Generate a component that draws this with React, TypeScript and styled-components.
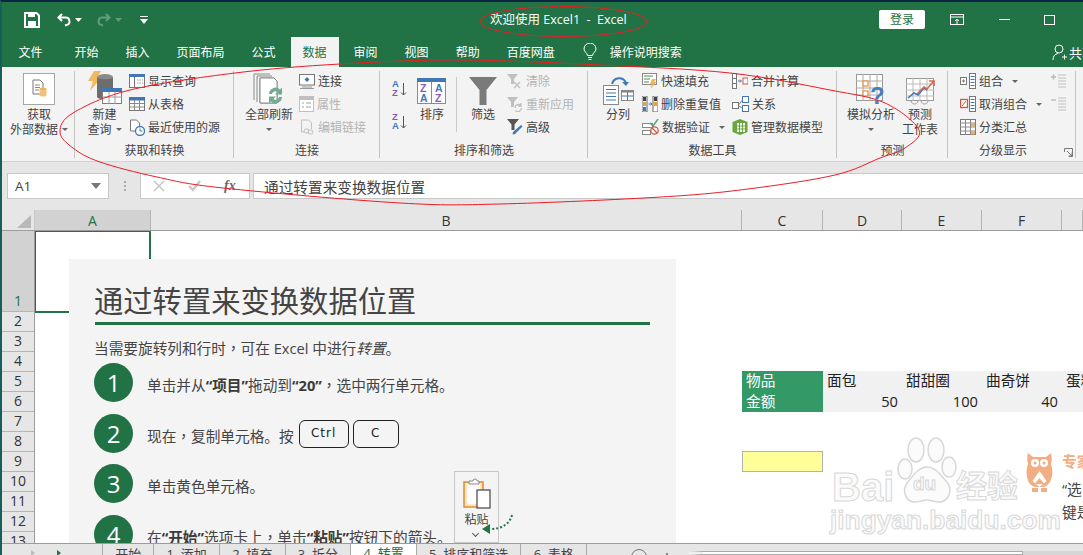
import React from "react";
import styled, { createGlobalStyle } from "styled-components";

const green = "#217346";
const cjk = `"Open Sans", "Noto Sans CJK SC", sans-serif`;
const colTemplate = "116px 591px 81px 79px 80px 80px 1fr";

const Global = createGlobalStyle`
  html, body { margin: 0; padding: 0; overflow: hidden; background: #fff; }
  * { box-sizing: border-box; }
  svg { display: block; flex: none; }
`;

const Windowed = styled.div`
  position: relative;
  width: 1083px;
  height: 555px;
  display: flex;
  flex-direction: column;
  overflow: hidden;
  border-top: 2px solid #0a2540;
  border-left: 2px solid #17605a;
  font-family: ${cjk};
  font-size: 12px;
  color: #444;
`;

const TitleBar = styled.div`
  height: 35px;
  flex: none;
  background: ${green};
  display: flex;
  align-items: center;
  padding-left: 22px;
  color: #fff;
`;
const Quick = styled.div`
  width: 466px;
  display: flex;
  align-items: center;
  gap: 3px;
`;
const Spacer = styled.div<{ $w: number }>`
  width: ${(p) => p.$w}px;
`;
const TitleText = styled.div`
  width: 389px;
  margin-top: -2px;
  font-size: 12.5px;
  white-space: pre;
`;
const LoginButton = styled.div`
  width: 46px;
  height: 19px;
  margin-top: -1px;
  background: #fff;
  color: ${green};
  border-radius: 2px;
  font-size: 12px;
  display: flex;
  align-items: center;
  justify-content: center;
`;
const WinButtons = styled.div`
  display: flex;
  align-items: center;
  margin-left: 25px;
`;
const WinButton = styled.div<{ $w: number }>`
  width: ${(p) => p.$w}px;
`;
const TabBar = styled.div`
  height: 30px;
  flex: none;
  background: ${green};
  display: flex;
  padding-left: 3px;
  position: relative;
`;
const Tab = styled.div<{ $active?: boolean; $gap?: number }>`
  height: 30px;
  padding: 0 12px;
  margin: 0 1.5px 0 ${(p) => p.$gap ?? 1.5}px;
  display: flex;
  align-items: center;
  color: ${(p) => (p.$active ? green : "#fff")};
  background: ${(p) => (p.$active ? "#f3f3f3" : "transparent")};
`;
const ShareArea = styled.div`
  position: absolute;
  left: 1050px;
  top: 6px;
  width: 33px;
  display: flex;
  align-items: center;
  gap: 2px;
  color: #fff;
  font-size: 13px;
  white-space: nowrap;
  overflow: hidden;
`;

const Ribbon = styled.div`
  height: 95px;
  flex: none;
  background: #f3f3f3;
  border-bottom: 1px solid #d2d2d2;
  display: flex;
`;
const Group = styled.div<{ $w: number }>`
  position: relative;
  width: ${(p) => p.$w}px;
  height: 91px;
  flex: none;
  display: flex;
  flex-direction: column;
  &::after {
    content: "";
    position: absolute;
    right: 0;
    top: 4px;
    bottom: 0;
    width: 1px;
    background: #c4c4c4;
  }
`;
const GroupBody = styled.div`
  flex: 1;
  display: flex;
  align-items: flex-start;
  min-height: 0;
`;
const GroupLabel = styled.div<{ $pad?: number }>`
  height: 15px;
  line-height: 15px;
  text-align: center;
  padding-right: ${(p) => p.$pad ?? 0}px;
  white-space: nowrap;
`;
const BigButton = styled.div<{ $w: number; $ml: number }>`
  width: ${(p) => p.$w}px;
  margin-left: ${(p) => p.$ml}px;
  display: flex;
  flex-direction: column;
  align-items: center;
  flex: none;
`;
const IconSlot = styled.div`
  height: 40px;
  display: flex;
  align-items: flex-end;
  justify-content: center;
  padding-bottom: 2px;
`;
const BigLine = styled.div`
  height: 15px;
  line-height: 15px;
  white-space: nowrap;
  display: flex;
  align-items: center;
`;
const SmallColumn = styled.div<{ $ml: number; $w?: number }>`
  margin-left: ${(p) => p.$ml}px;
  width: ${(p) => (p.$w ? `${p.$w}px` : "auto")};
  flex: none;
  padding-top: 2.5px;
`;
const SmallItem = styled.div<{ $off?: boolean }>`
  height: 23px;
  display: flex;
  align-items: center;
  gap: 3px;
  white-space: nowrap;
  color: ${(p) => (p.$off ? "#b4b4b4" : "#444")};
`;
const SortStack = styled.div`
  margin-left: 12px;
  padding-top: 12px;
  display: flex;
  flex-direction: column;
  gap: 15px;
  flex: none;
`;
const ThinRule = styled.div`
  width: 1px;
  height: 55px;
  margin: 10px 0 0 7px;
  background: #c8c8c8;
  flex: none;
`;
const Caret = styled.span<{ $ml?: number }>`
  display: inline-block;
  width: 0;
  height: 0;
  margin-left: ${(p) => p.$ml ?? 4}px;
  border-left: 3px solid transparent;
  border-right: 3px solid transparent;
  border-top: 3px solid #666;
`;
const Launcher = styled.div`
  position: absolute;
  right: 3px;
  bottom: 1px;
`;

const FormulaRow = styled.div`
  height: 48px;
  flex: none;
  background: #e6e6e6;
  padding: 11px 0 11px 5px;
  display: flex;
  align-items: stretch;
`;
const NameBox = styled.div`
  width: 102px;
  background: #fff;
  border: 1px solid #c8c8c8;
  display: flex;
  align-items: center;
  justify-content: space-between;
  padding: 0 7px;
  font-size: 13.5px;
  color: #444;
`;
const Grip = styled.div`
  width: 31px;
  display: flex;
  flex-direction: column;
  align-items: center;
  justify-content: center;
  gap: 2px;
  span {
    width: 2px;
    height: 2px;
    background: #aaa;
  }
`;
const FxBox = styled.div`
  width: 110px;
  background: #fff;
  border: 1px solid #c8c8c8;
  display: flex;
  align-items: center;
  padding-left: 12px;
  gap: 23px;
`;
const FxLabel = styled.span`
  font-family: "Liberation Serif", serif;
  font-style: italic;
  font-weight: bold;
  font-size: 14px;
  color: #6a6a6a;
`;
const FormulaInput = styled.div`
  flex: 1;
  margin-left: 3px;
  background: #fff;
  border: 1px solid #c8c8c8;
  border-right: 0;
  display: flex;
  align-items: center;
  padding-left: 10px;
  font-size: 14.67px;
`;

const HeaderRow = styled.div`
  height: 21px;
  flex: none;
  display: flex;
  background: #e6e6e6;
  border-bottom: 1px solid #9c9c9c;
`;
const CornerCell = styled.div`
  width: 33px;
  flex: none;
  border-right: 1px solid #c8c8c8;
  display: flex;
  align-items: flex-end;
  justify-content: flex-end;
  padding: 0 3px 2px 0;
  &::before {
    content: "";
    border-left: 14px solid transparent;
    border-bottom: 13px solid #b8b8b8;
  }
`;
const ColHeads = styled.div`
  flex: 1;
  display: grid;
  grid-template-columns: ${colTemplate};
`;
const ColHead = styled.div<{ $active?: boolean }>`
  display: flex;
  align-items: center;
  justify-content: center;
  font-size: 14px;
  color: ${(p) => (p.$active ? green : "#333")};
  background: ${(p) => (p.$active ? "#d2d2d2" : "transparent")};
  border-right: 1px solid #b4b4b4;
`;

const SheetBody = styled.div`
  flex: 1;
  min-height: 0;
  display: flex;
  overflow: hidden;
`;
const RowHeads = styled.div`
  width: 33px;
  flex: none;
  display: flex;
  flex-direction: column;
  background: #e6e6e6;
  border-right: 1px solid #9c9c9c;
`;
const RowHead = styled.div<{ $active?: boolean }>`
  height: ${(p) => (p.$active ? 81 : 20)}px;
  flex: none;
  display: flex;
  align-items: flex-end;
  justify-content: center;
  font-size: 14px;
  line-height: 20px;
  color: ${(p) => (p.$active ? green : "#333")};
  background: ${(p) => (p.$active ? "#d2d2d2" : "transparent")};
  border-bottom: 1px solid #b4b4b4;
`;
const Canvas = styled.div`
  position: relative;
  flex: 1;
  display: grid;
  grid-template-columns: ${colTemplate};
  grid-template-rows: 81px repeat(12, 20px);
  overflow: hidden;
  font-size: 14.67px;
  color: #222;
`;
const SelectedCell = styled.div`
  grid-column: 1;
  grid-row: 1;
  margin: -1px 0 -1px -1px;
  border: 2px solid ${green};
`;
const DataCell = styled.div<{ $col: number; $row: number; $head?: boolean; $right?: boolean }>`
  grid-column: ${(p) => p.$col};
  grid-row: ${(p) => p.$row};
  margin-top: ${(p) => (p.$row === 5 ? -1 : 0)}px;
  background: ${(p) => (p.$head ? "#339966" : "#f1f1f1")};
  color: ${(p) => (p.$head ? "#fff" : "#222")};
  display: flex;
  align-items: center;
  justify-content: ${(p) => (p.$right ? "flex-end" : "flex-start")};
  padding: 0 4px 3px;
  line-height: 20px;
  white-space: nowrap;
  overflow: hidden;
`;
const YellowCell = styled.div`
  grid-column: 3;
  grid-row: 9;
  background: #ffff99;
  border: 1px solid #b2b2b2;
  margin: -1px 0 0 0;
`;
const Panel = styled.div`
  position: absolute;
  left: 34px;
  top: 28px;
  width: 607px;
  bottom: 0;
  background: #f4f4f4;
  padding: 21px 26px 0 25px;
  color: #444;
`;
const PanelTitle = styled.div`
  font-size: 29.3px;
  line-height: 42px;
  white-space: nowrap;
`;
const PanelRule = styled.div`
  height: 3px;
  margin-left: 1px;
  background: ${green};
`;
const Intro = styled.div`
  margin-top: 13px;
  line-height: 20px;
  font-size: 14.67px;
  em { font-style: italic; }
`;
const Punct = styled.span`
  font-family: "Noto Sans CJK TC", sans-serif;
`;
const Steps = styled.div`
  margin-top: 5px;
  display: flex;
  flex-direction: column;
  gap: 11.5px;
`;
const Step = styled.div`
  display: flex;
  align-items: center;
  height: 39px;
`;
const StepNum = styled.div`
  width: 39px;
  height: 39px;
  border-radius: 50%;
  background: ${green};
  color: #fff;
  font-size: 24px;
  display: flex;
  align-items: center;
  justify-content: center;
  flex: none;
`;
const StepText = styled.div`
  margin: 4px 0 0 14px;
  display: flex;
  align-items: center;
  font-size: 14.67px;
  white-space: pre;
  b { font-weight: bold; color: #3a3a3a; }
`;
const Kbd = styled.div<{ $w: number; $ml: number }>`
  width: ${(p) => p.$w}px;
  height: 28px;
  margin: -3px 0 0 ${(p) => p.$ml}px;
  border: 1.5px solid #222;
  border-radius: 6px;
  display: flex;
  align-items: center;
  justify-content: center;
  padding-bottom: 2px;
  font-family: "DejaVu Sans", sans-serif;
  font-size: 12px;
  letter-spacing: 1px;
  color: #222;
`;
const PasteCard = styled.div`
  position: absolute;
  left: 385px;
  top: 212px;
  width: 45px;
  height: 72px;
  border: 1px solid #c8c8c8;
  display: flex;
  flex-direction: column;
  align-items: center;
  padding-top: 6px;
  font-size: 12px;
`;
const PasteLabel = styled.div`
  margin-top: 2px;
  line-height: 15px;
`;
const PasteArrow = styled.div`
  position: absolute;
  left: 410px;
  top: 254px;
`;
const Chevron = styled.div`
  width: 5px;
  height: 5px;
  margin-top: 4px;
  margin-left: -2px;
  border-right: 1px solid #555;
  border-bottom: 1px solid #555;
  transform: rotate(45deg);
`;
const OwlSlot = styled.div`
  position: absolute;
  left: 991px;
  top: 222px;
`;
const TipText = styled.div`
  position: absolute;
  left: 1027px;
  top: 219px;
  width: 30px;
  color: #444;
  line-height: 23px;
  font-size: 14.67px;
  white-space: nowrap;
`;
const TipHead = styled.div`
  color: #f3ad82;
  font-weight: bold;
  margin-bottom: 5px;
`;
const Water = styled.div<{ $x: number; $y: number; $size: number }>`
  position: absolute;
  left: ${(p) => p.$x}px;
  top: ${(p) => p.$y}px;
  font-family: "Liberation Sans", "Noto Sans CJK SC", sans-serif;
  font-size: ${(p) => p.$size}px;
  font-weight: bold;
  line-height: 1;
  white-space: nowrap;
  color: #fbfbfb;
  -webkit-text-stroke: 1px #d8d8d8;
`;
const PawSlot = styled.div`
  position: absolute;
  left: 861px;
  top: 206px;
`;

const TabStrip = styled.div`
  height: 12px;
  flex: none;
  background: #e6e6e6;
  border-top: 1px solid #9c9c9c;
  display: flex;
  overflow: hidden;
`;
const NavArea = styled.div`
  width: 100px;
  flex: none;
  display: flex;
  padding: 6px 0 0 29px;
  gap: 22px;
`;
const NavMark = styled.div<{ $dim?: boolean }>`
  width: 0;
  height: 0;
  border-top: 3px solid transparent;
  border-bottom: 3px solid transparent;
  border-left: 4px solid ${(p) => (p.$dim ? "#bbb" : green)};
`;
const SheetTab = styled.div<{ $active?: boolean; $last?: boolean }>`
  height: 20px;
  padding: 0 12.2px;
  line-height: 20px;
  font-size: 13px;
  white-space: pre;
  margin-top: ${(p) => (p.$active ? -1 : 0)}px;
  background: ${(p) => (p.$active ? "#fff" : "transparent")};
  color: ${(p) => (p.$active ? green : "#444")};
  border-left: 1px solid #aaa;
  border-right: ${(p) => (p.$last ? "1px solid #aaa" : "0")};
`;
const TabExtras = styled.div`
  width: 102px;
  flex: none;
  display: flex;
  padding: 5px 0 0 10px;
`;
const PlusCircle = styled.div`
  width: 16px;
  height: 16px;
  margin-left: 25px;
  border-radius: 50%;
  border: 1px solid #777;
`;
const TabGrip = styled.div`
  width: 2px;
  height: 2px;
  margin: 4px 0 0 19px;
  background: #888;
`;
const ScrollTrack = styled.div`
  flex: 1;
  margin-top: 7px;
  display: flex;
  background: #d6d6d6;
`;
const ScrollThumb = styled.div`
  width: 334px;
  background: #fff;
  border: 1px solid #aaa;
  border-left: 14px solid #f0f0f0;
`;
const Overlay = styled.svg`
  position: absolute;
  left: -2px;
  top: -2px;
  pointer-events: none;
`;

// hand drawn red ring from the reference
const ringPoints: [number, number][] = [
  [60, 132], [73, 113], [130, 90], [235, 73], [340, 64], [460, 60], [600, 65], [730, 73], [830, 90], [885, 103],
  [919, 130], [905, 148], [880, 158], [835, 175], [748, 189], [661, 197], [500, 204], [400, 203], [223, 188],
  [157, 177], [100, 162], [73, 148],
];

function closedCurve(pts: [number, number][]) {
  const n = pts.length;
  let d = `M${pts[0][0]} ${pts[0][1]}`;
  for (let i = 0; i < n; i++) {
    const p0 = pts[(i - 1 + n) % n];
    const p1 = pts[i];
    const p2 = pts[(i + 1) % n];
    const p3 = pts[(i + 2) % n];
    d += `C${p1[0] + (p2[0] - p0[0]) / 6} ${p1[1] + (p2[1] - p0[1]) / 6} ${p2[0] - (p3[0] - p1[0]) / 6} ${p2[1] - (p3[1] - p1[1]) / 6} ${p2[0]} ${p2[1]}`;
  }
  return d + "Z";
}

const blueHead = "#3f78b5";
const gray = "#7a7a7a";
const dim = "#c0c0c0";

const SaveIcon = () => (
  <svg width="16" height="16" viewBox="0 0 16 16">
    <path d="M1 1h11.500L15 3.500V15H1z" fill="none" stroke="#fff" strokeWidth="2" />
    <rect x="4" y="1" width="7" height="4" fill="#fff" />
    <rect x="4" y="9" width="8" height="6" fill="#fff" />
  </svg>
);
const UndoIcon = ({ c, flip }: { c: string; flip?: boolean }) => (
  <svg width="16" height="16" viewBox="0 0 16 16">
    <g transform={flip ? "matrix(-1 0 0 1 16 0)" : undefined}>
      <path d="M6 2L2.500 5.500 6 9M3 5.500h6.500a3.800 3.800 0 0 1 1 7.500L9 13.500" fill="none" stroke={c} strokeWidth="2" />
    </g>
  </svg>
);
const QatCaret = ({ c = "#fff" }: { c?: string }) => (
  <svg width="7" height="4" viewBox="0 0 7 4"><path d="M0 0h7L3.500 4z" fill={c} /></svg>
);
const QatMore = () => (
  <svg width="8" height="8" viewBox="0 0 8 8">
    <rect x="0" y="0" width="8" height="1" fill="#fff" />
    <path d="M0 3h8L4 8z" fill="#fff" />
  </svg>
);
const RibbonModeIcon = () => (
  <svg width="14" height="11" viewBox="0 0 14 11">
    <rect x=".5" y=".5" width="13" height="10" fill="none" stroke="#fff" />
    <path d="M1 3h12M7 10V5M5 7l2-2 2 2" stroke="#fff" fill="none" />
  </svg>
);
const MinIcon = () => <svg width="11" height="1" viewBox="0 0 11 1"><rect width="11" height="1" fill="#fff" /></svg>;
const MaxIcon = () => (
  <svg width="11" height="10" viewBox="0 0 11 10"><rect x=".5" y=".5" width="10" height="9" fill="none" stroke="#fff" /></svg>
);
const BulbIcon = () => (
  <svg width="14" height="18" viewBox="0 0 14 18">
    <path d="M4.500 12.500C4 9.500 1 8.800 1 6a6 6 0 0 1 12 0c0 2.800-3 3.500-3.500 6.500z" fill="none" stroke="#fff" />
    <path d="M5 14.500h4M5.500 16.500h3" stroke="#fff" />
  </svg>
);
const UserIcon = () => (
  <svg width="15" height="17" viewBox="0 0 15 17">
    <circle cx="7" cy="5" r="4" fill="none" stroke="#fff" />
    <path d="M1 16c0-4 2-6 5-6.500M10 13h5M12.500 10.500v5" stroke="#fff" fill="none" />
  </svg>
);

const ExternalDataIcon = () => (
  <svg width="32" height="32" viewBox="0 0 32 32">
    <rect x=".5" y=".5" width="31" height="31" fill="#fff" stroke="#a6a6a6" />
    <path d="M10 7h7l3 3v11H10z" fill="#fff" stroke="#777" />
    <path d="M12 12h5M12 14.500h5M12 17h4" stroke="#888" />
    <ellipse cx="20" cy="16" rx="3.500" ry="1.500" fill="#f0b34f" />
    <path d="M16.500 16v6c0 2 7 2 7 0v-6c0 2-7 2-7 0z" fill="#f3c27a" />
  </svg>
);
const NewQueryIcon = () => (
  <svg width="36" height="34" viewBox="0 0 36 34">
    <path d="M7 0h7l-4 7h4L3 20l3-10H1z" fill="#f2b862" />
    <ellipse cx="18" cy="6" rx="8" ry="3" fill="#8a8a8a" />
    <path d="M10 6v20c0 3 16 3 16 0V6c0 3-16 3-16 0z" fill="#6d6d6d" />
    <rect x="15.500" y="17.500" width="19" height="15" fill="#fff" stroke="#7d7d7d" />
    <rect x="15" y="17" width="20" height="4" fill={blueHead} />
    <path d="M22 21v12M28 21v12M15 26h20" stroke="#9a9a9a" />
  </svg>
);
const ShowQueryIcon = () => (
  <svg width="16" height="16" viewBox="0 0 16 16">
    <rect x=".5" y="1.500" width="15" height="13" fill="#fff" stroke="#777" />
    <rect x="0" y="1" width="16" height="3" fill={blueHead} />
    <path d="M5.500 4v10" stroke="#777" />
    <path d="M8 7h6M8 10h6" stroke="#999" strokeDasharray="1.500 1" />
  </svg>
);
const FromTableIcon = () => (
  <svg width="16" height="16" viewBox="0 0 16 16">
    <rect x=".5" y="1.500" width="15" height="13" fill="#fff" stroke="#777" />
    <rect x="0" y="1" width="16" height="3.500" fill={blueHead} />
    <path d="M5.500 4v10M10.500 4v10M1 7.500h14M1 11h14" stroke="#888" />
  </svg>
);
const RecentIcon = () => (
  <svg width="16" height="17" viewBox="0 0 16 17">
    <path d="M1.500 1h6l3 3v8h-9z" fill="#fff" stroke="#777" />
    <circle cx="11" cy="12" r="4.500" fill="#fff" stroke="#3f78b5" strokeWidth="1.300" />
    <path d="M11 9.500V12h2.500" stroke="#3f78b5" fill="none" />
  </svg>
);
const RefreshAllIcon = () => (
  <svg width="34" height="32" viewBox="0 0 34 32">
    <path d="M2 1h16M2 1v26M5 3v26M8 5h14l3 3v22H8z" fill="none" stroke="#8a8a8a" />
    <path d="M5 3h15" stroke="#8a8a8a" />
    <path d="M8 5h14l3 3v22H8z" fill="#fff" stroke="#8a8a8a" />
    <path d="M17 21a6.500 6.500 0 0 1 11-4.500l2-2v7h-7l2.500-2.500a3.500 3.500 0 0 0-5.500 2zM30 24a6.500 6.500 0 0 1-11 4.500l-2 2v-7h7l-2.500 2.500a3.500 3.500 0 0 0 5.500-2z" fill="#71ab92" />
  </svg>
);
const ConnectIcon = () => (
  <svg width="16" height="15" viewBox="0 0 16 15">
    <rect x=".5" y=".5" width="15" height="10.500" fill="#fff" stroke="#777" />
    <path d="M3 13h10M1 14.500h14" stroke="#999" />
    <path d="M8 3l2.500 2.500L8 8 5.500 5.500z" fill={blueHead} />
  </svg>
);
const PropsIcon = () => (
  <svg width="15" height="16" viewBox="0 0 15 16">
    <rect x=".5" y=".5" width="14" height="15" fill="#fff" stroke={dim} />
    <rect x="1" y="1" width="13" height="3" fill={dim} />
    <path d="M3 7h2M7 7h5M3 11h2M7 11h5" stroke={dim} strokeWidth="1.300" />
  </svg>
);
const EditLinkIcon = () => (
  <svg width="16" height="16" viewBox="0 0 16 16">
    <path d="M2.500 1h7l3 3v6M2.500 1v12h3" fill="none" stroke={dim} />
    <rect x="5" y="10" width="5" height="4" rx="2" fill="none" stroke={dim} />
    <rect x="9" y="11" width="5" height="4" rx="2" fill="none" stroke={dim} />
  </svg>
);
const SortMini = ({ a, b, c1, c2 }: { a: string; b: string; c1: string; c2: string }) => (
  <svg width="16" height="18" viewBox="0 0 16 18">
    <text x="0" y="8" fontSize="9.500" fontWeight="bold" fontFamily="Liberation Sans" fill={c1}>{a}</text>
    <text x="0" y="17" fontSize="9.500" fontWeight="bold" fontFamily="Liberation Sans" fill={c2}>{b}</text>
    <path d="M11.500 4v12M9 13.500l2.500 2.500 2.500-2.500" fill="none" stroke="#555" />
  </svg>
);
const SortBigIcon = () => (
  <svg width="30" height="27" viewBox="0 0 30 27">
    <rect x=".5" y=".5" width="28" height="25" fill="#fff" stroke="#8a8a8a" />
    <rect x="0" y="0" width="29" height="4" fill={blueHead} />
    <path d="M14.500 4v22" stroke="#8a8a8a" />
    <g fontFamily="Liberation Sans" fontSize="10.500" fontWeight="bold">
      <text x="3" y="13.500" fill="#8a5bb0">Z</text>
      <text x="3" y="24" fill="#3f78b5">A</text>
      <text x="18" y="13.500" fill="#3f78b5">A</text>
      <text x="18" y="24" fill="#8a5bb0">Z</text>
    </g>
  </svg>
);
const Funnel = ({ c }: { c: string }) => (
  <svg width="28" height="28" viewBox="0 0 28 28">
    <path d="M0 0h28L17.500 13v15h-7V13z" fill={c} />
  </svg>
);
const ClearIcon = () => (
  <svg width="16" height="16" viewBox="0 0 16 16">
    <path d="M0 1h11L7 6v5H4V6z" fill={dim} />
    <path d="M7 9l6 6M13 9l-6 6" stroke={dim} strokeWidth="1.400" />
  </svg>
);
const ReapplyIcon = () => (
  <svg width="16" height="16" viewBox="0 0 16 16">
    <path d="M0 1h11L7 6v5H4V6z" fill={dim} />
    <path d="M8 12a3.500 3.500 0 0 1 6-2.500M14 7v3h-3M14.500 12a3.500 3.500 0 0 1-6 2.500" fill="none" stroke={dim} strokeWidth="1.300" />
  </svg>
);
const AdvancedIcon = () => (
  <svg width="16" height="16" viewBox="0 0 16 16">
    <path d="M0 0h12L7.500 5.500V11h-3V5.500z" fill="#555" />
    <path d="M14 6l1.500 1.500L8 15l-2.500.5.500-2.500z" fill={blueHead} />
  </svg>
);
const SplitIcon = () => (
  <svg width="31" height="28" viewBox="0 0 31 28">
    <path d="M9 7C11 0 20-1 23 6" fill="none" stroke={blueHead} strokeWidth="2" />
    <path d="M19 5h7l-3 4z" fill={blueHead} />
    <rect x=".5" y="8.500" width="15" height="19" fill="#fff" stroke="#888" />
    <path d="M3 12.500h10M3 16h10M3 19.500h10M3 23h10" stroke={blueHead} />
    <rect x="18.500" y="13.500" width="12" height="10" fill="#fff" stroke="#888" />
    <rect x="18" y="13" width="13" height="2.500" fill="#888" />
    <path d="M24.500 15v8M19 19h11" stroke={blueHead} />
  </svg>
);
const FlashIcon = () => (
  <svg width="16" height="16" viewBox="0 0 16 16">
    <rect x=".5" y=".5" width="14" height="11" fill="#fff" stroke="#888" />
    <path d="M2 3h9M2 6h6M2 9h5" stroke="#8fb08f" strokeWidth="1.300" />
    <path d="M10 6h4l-2 3h2.500L8.500 16l1.500-5H8z" fill="#efb458" />
  </svg>
);
const DedupeIcon = () => (
  <svg width="16" height="16" viewBox="0 0 16 16">
    <rect x="0" y="0" width="5" height="16" fill="#fff" stroke="#666" />
    <rect x="11" y="0" width="5" height="16" fill="#fff" stroke="#666" />
    <rect x="1" y="1" width="3" height="4" fill="#444" />
    <rect x="1" y="6" width="3" height="4" fill="#e3a14a" />
    <rect x="1" y="11" width="3" height="4" fill={blueHead} />
    <rect x="12" y="1" width="3" height="4" fill="#444" />
    <rect x="12" y="6" width="3" height="4" fill="#e3a14a" />
    <path d="M6.500 8h3M8.500 6.500L10 8l-1.500 1.500" stroke={blueHead} fill="none" />
  </svg>
);
const ValidateIcon = () => (
  <svg width="17" height="16" viewBox="0 0 17 16">
    <rect x=".5" y="4.500" width="10" height="4" fill="#fff" stroke="#888" />
    <rect x=".5" y="11.500" width="8" height="4" fill="#fff" stroke="#888" />
    <path d="M8 4l3 3 5-7" fill="none" stroke="#5aa77f" strokeWidth="1.500" />
    <circle cx="12.500" cy="11.500" r="3.700" fill="#fff" stroke="#d9543f" strokeWidth="1.300" />
    <path d="M10 9l5 5" stroke="#d9543f" strokeWidth="1.300" />
  </svg>
);
const ConsolidateIcon = () => (
  <svg width="16" height="16" viewBox="0 0 16 16">
    <rect x=".5" y=".5" width="4" height="15" fill="#fff" stroke="#777" />
    <path d="M1 5.500h3M1 10.500h3" stroke="#777" />
    <path d="M6 8h3M8 6.500L9.500 8 8 9.500" stroke={blueHead} fill="none" />
    <rect x="11" y="5" width="5" height="6" fill="#fff" stroke="#d9543f" />
  </svg>
);
const RelationIcon = () => (
  <svg width="17" height="16" viewBox="0 0 17 16">
    <rect x=".5" y="6.500" width="6" height="6" fill="#fff" stroke="#777" />
    <rect x="10.500" y=".5" width="6" height="6" fill="#fff" stroke={blueHead} />
    <rect x="10.500" y="9.500" width="6" height="6" fill="#fff" stroke={blueHead} />
    <path d="M6.500 9L10.500 4M6.500 10l4 2" stroke="#888" />
  </svg>
);
const ModelIcon = () => (
  <svg width="16" height="16" viewBox="0 0 16 16">
    <path d="M8 0l7.500 3v10L8 16 .5 13V3z" fill="#66a83b" />
    <rect x="5" y="4" width="8" height="9" fill="#fff" />
    <path d="M7.500 4v9M10.500 4v9M5 7h8M5 10h8" stroke="#66a83b" />
  </svg>
);
const WhatIfIcon = () => (
  <svg width="30" height="31" viewBox="0 0 30 31">
    <rect x=".5" y=".5" width="26" height="26" fill="#fff" stroke="#999" />
    <path d="M7 0v27M14 0v27M21 0v27M0 7h27M0 14h27M0 21h27" stroke="#aaa" />
    <rect x="7" y="7" width="5" height="5" fill="#fff" stroke="#e8944a" strokeWidth="1.300" />
    <rect x="7" y="17" width="5" height="5" fill="#fff" stroke="#e8944a" strokeWidth="1.300" />
    <text x="14" y="30" fontFamily="Liberation Sans" fontWeight="bold" fontSize="24" fill="#4a7fbf">?</text>
  </svg>
);
const ForecastIcon = () => (
  <svg width="29" height="27" viewBox="0 0 29 27">
    <rect x=".5" y=".5" width="27" height="22" fill="#fff" stroke="#999" />
    <path d="M7 0v23M14 0v23M21 0v23M0 6h28M0 12h28M0 18h28" stroke="#bbb" />
    <path d="M2 20l6-5 4 2 6-7 3 2" fill="none" stroke={blueHead} strokeWidth="1.600" />
    <path d="M11 16l7-7 3 2 6-7M23 3h5v5" fill="none" stroke="#d9654a" strokeWidth="1.600" />
    <path d="M5 23c1 4 6 4 7 0M15 23c1 4 6 4 7 0" fill="none" stroke="#999" />
  </svg>
);
const GroupIcon = () => (
  <svg width="16" height="16" viewBox="0 0 16 16">
    <rect x=".5" y="4.500" width="6" height="7" fill="#fff" stroke="#777" />
    <path d="M2 8h3M3.500 6.500v3" stroke="#777" />
    <rect x="9.500" y=".5" width="6" height="15" fill="#fff" stroke="#777" />
    <path d="M10.500 3.500h4M10.500 6.500h4M10.500 9.500h4M10.500 12.500h4" stroke={blueHead} />
  </svg>
);
const UngroupIcon = () => (
  <svg width="16" height="16" viewBox="0 0 16 16">
    <rect x=".5" y="3.500" width="7" height="8" fill="#fff" stroke="#d9543f" strokeWidth="1.300" />
    <path d="M2 10l4-5" stroke="#d9543f" />
    <rect x="9.500" y=".5" width="6" height="15" fill="#fff" stroke="#777" />
    <path d="M10.500 3.500h4M10.500 6.500h4M10.500 9.500h4M10.500 12.500h4" stroke={blueHead} />
  </svg>
);
const SubtotalIcon = () => (
  <svg width="16" height="16" viewBox="0 0 16 16">
    <rect x=".5" y=".5" width="15" height="15" fill="#fff" stroke="#777" />
    <path d="M5.500 0v16M10.500 0v16M0 4h16M0 8h16M0 12h16" stroke="#888" />
    <rect x="11" y="4.500" width="4" height="3" fill="#e8b06a" />
    <rect x="11" y="12.500" width="4" height="3" fill="#e8b06a" />
  </svg>
);
const DetailIcon = ({ plus }: { plus?: boolean }) => (
  <svg width="15" height="15" viewBox="0 0 15 15">
    <path d={plus ? "M0 3h5M2.500 .5v5" : "M0 3h5"} stroke="#bbb" strokeWidth="1.500" />
    <path d="M7 1h8M7 4h8M7 7h8M7 10h8M7 13h8" stroke={dim} />
  </svg>
);
const LaunchIcon = () => (
  <svg width="9" height="9" viewBox="0 0 9 9">
    <path d="M.5 4V.5H8.500V8.500H5M3 3l5 5M4.500 8H8V4.500" fill="none" stroke="#777" />
  </svg>
);
const SmallDown = () => (
  <svg width="10" height="6" viewBox="0 0 10 6"><path d="M0 0h10L5 6z" fill="#777" /></svg>
);
const CrossIcon = () => (
  <svg width="12" height="12" viewBox="0 0 12 12"><path d="M1 1l10 10M11 1L1 11" stroke="#c8c8c8" strokeWidth="1.600" /></svg>
);
const CheckIcon = () => (
  <svg width="13" height="12" viewBox="0 0 13 12"><path d="M1 6l4 4 7-9" fill="none" stroke="#c8c8c8" strokeWidth="2.400" /></svg>
);
const ClipboardIcon = () => (
  <svg width="28" height="32" viewBox="0 0 28 32">
    <path d="M1 4h19v25H1z" fill="#fbe6c4" stroke="#e08a2c" strokeWidth="1.500" />
    <rect x="4" y="6" width="13" height="20" fill="#fff" />
    <path d="M6 6V3h4a2 2 0 0 1 4 0h2v3z" fill="#fff" stroke="#888" />
    <rect x="14" y="12" width="13" height="18" fill="#fff" stroke="#444" strokeWidth="1.200" />
  </svg>
);
const DottedArrow = () => (
  <svg width="36" height="24" viewBox="0 0 36 24">
    <path d="M33 2C31 11 22 16 12 16" fill="none" stroke={green} strokeWidth="2" strokeDasharray="2 2" />
    <path d="M11 11v10L3 16z" fill={green} />
  </svg>
);
const OwlIcon = () => (
  <svg width="27" height="40" viewBox="0 0 27 40">
    <path d="M2 0l5 4h13l5-4c1 4 1 8 0 11 2 6 2 12-1 18-2 3-5 5-8 5h-5c-4 0-7-2-9-6C0 22 0 16 2 11 1 7 1 4 2 0z" fill="#f3ad82" />
    <circle cx="9" cy="10" r="4" fill="#fff" />
    <circle cx="18" cy="10" r="4" fill="#fff" />
    <circle cx="9" cy="10" r="1.500" fill="#f3ad82" />
    <circle cx="18" cy="10" r="1.500" fill="#f3ad82" />
    <path d="M13.500 18l7 10-7 6-7-6z" fill="#fff" />
    <path d="M13.500 25l5 6h-10z" fill="#f3ad82" />
    <path d="M6 35h6v4H6zM15 35h6v4h-6z" fill="#f3ad82" />
  </svg>
);
const PawIcon = () => (
  <svg width="62" height="68" viewBox="0 0 62 68">
    <g fill="#fbfbfb" stroke="#d8d8d8" strokeWidth="1.500">
      <ellipse cx="20" cy="13" rx="8" ry="12" />
      <ellipse cx="40" cy="13" rx="8" ry="12" />
      <ellipse cx="9" cy="32" rx="7" ry="10" />
      <ellipse cx="53" cy="30" rx="7" ry="10" />
      <path d="M31 30c9 0 13 8 20 15 6 7 2 20-8 20-5 0-8-2-12-2s-7 2-12 2c-10 0-13-12-8-19 6-7 11-16 20-16z" />
    </g>
  </svg>
);

function SmallButton({ icon, text, off, caret }: { icon: React.ReactNode; text: string; off?: boolean; caret?: boolean }) {
  return (
    <SmallItem $off={off}>
      {icon}
      <span>{text}</span>
      {caret && <Caret $ml={6} />}
    </SmallItem>
  );
}

const rowLabels = Array.from({ length: 13 }, (_, i) => i + 1);
const tabs = ["文件", "开始", "插入", "页面布局", "公式", "数据", "审阅", "视图", "帮助", "百度网盘"];
const sheets = ["开始", "1. 添加", "2. 填充", "3. 拆分", "4. 转置", "5. 排序和筛选", "6. 表格"];

export default function App() {
  return (
    <Windowed>
      <Global />
      <TitleBar>
        <Quick>
          <SaveIcon />
          <Spacer $w={10} />
          <UndoIcon c="#fff" />
          <QatCaret />
          <Spacer $w={8} />
          <UndoIcon c="#5f9d7d" flip />
          <QatCaret c="#5f9d7d" />
          <Spacer $w={12} />
          <QatMore />
        </Quick>
        <TitleText>欢迎使用 Excel1  -  Excel</TitleText>
        <LoginButton>登录</LoginButton>
        <WinButtons>
          <WinButton $w={49}><RibbonModeIcon /></WinButton>
          <WinButton $w={45}><MinIcon /></WinButton>
          <WinButton $w={20}><MaxIcon /></WinButton>
        </WinButtons>
      </TitleBar>

      <TabBar>
        {tabs.map((t, i) => (
          <Tab key={t} $active={t === "数据"} $gap={i === 1 ? 6.5 : 1.5}>{t}</Tab>
        ))}
        <Tab $gap={3}><BulbIcon /></Tab>
        <Tab $gap={-13}>操作说明搜索</Tab>
        <ShareArea><UserIcon /><span>共享</span></ShareArea>
      </TabBar>

      <Ribbon>
        <Group $w={73}>
          <GroupBody>
            <BigButton $w={66} $ml={4}>
              <IconSlot><ExternalDataIcon /></IconSlot>
              <BigLine>获取</BigLine>
              <BigLine>外部数据<Caret /></BigLine>
            </BigButton>
          </GroupBody>
        </Group>
        <Group $w={159}>
          <GroupBody>
            <BigButton $w={40} $ml={9.5}>
              <IconSlot><NewQueryIcon /></IconSlot>
              <BigLine>新建</BigLine>
              <BigLine>查询<Caret /></BigLine>
            </BigButton>
            <SmallColumn $ml={4.5}>
              <SmallButton icon={<ShowQueryIcon />} text="显示查询" />
              <SmallButton icon={<FromTableIcon />} text="从表格" />
              <SmallButton icon={<RecentIcon />} text="最近使用的源" />
            </SmallColumn>
          </GroupBody>
          <GroupLabel>获取和转换</GroupLabel>
        </Group>
        <Group $w={146}>
          <GroupBody>
            <BigButton $w={56} $ml={7}>
              <IconSlot><RefreshAllIcon /></IconSlot>
              <BigLine>全部刷新</BigLine>
              <BigLine><Caret $ml={0} /></BigLine>
            </BigButton>
            <SmallColumn $ml={2}>
              <SmallButton icon={<ConnectIcon />} text="连接" />
              <SmallButton icon={<PropsIcon />} text="属性" off />
              <SmallButton icon={<EditLinkIcon />} text="编辑链接" off />
            </SmallColumn>
          </GroupBody>
          <GroupLabel>连接</GroupLabel>
        </Group>
        <Group $w={208}>
          <GroupBody>
            <SortStack>
              <SortMini a="A" b="Z" c1="#3f78b5" c2="#8a5bb0" />
              <SortMini a="Z" b="A" c1="#8a5bb0" c2="#3f78b5" />
            </SortStack>
            <BigButton $w={34} $ml={7}>
              <IconSlot><SortBigIcon /></IconSlot>
              <BigLine>排序</BigLine>
            </BigButton>
            <ThinRule />
            <BigButton $w={34} $ml={9}>
              <IconSlot><Funnel c={gray} /></IconSlot>
              <BigLine>筛选</BigLine>
            </BigButton>
            <SmallColumn $ml={7}>
              <SmallButton icon={<ClearIcon />} text="清除" off />
              <SmallButton icon={<ReapplyIcon />} text="重新应用" off />
              <SmallButton icon={<AdvancedIcon />} text="高级" />
            </SmallColumn>
          </GroupBody>
          <GroupLabel>排序和筛选</GroupLabel>
        </Group>
        <Group $w={249}>
          <GroupBody>
            <BigButton $w={36} $ml={12}>
              <IconSlot><SplitIcon /></IconSlot>
              <BigLine>分列</BigLine>
            </BigButton>
            <SmallColumn $ml={6} $w={90}>
              <SmallButton icon={<FlashIcon />} text="快速填充" />
              <SmallButton icon={<DedupeIcon />} text="删除重复值" />
              <SmallButton icon={<ValidateIcon />} text="数据验证" caret />
            </SmallColumn>
            <SmallColumn $ml={0}>
              <SmallButton icon={<ConsolidateIcon />} text="合并计算" />
              <SmallButton icon={<RelationIcon />} text="关系" />
              <SmallButton icon={<ModelIcon />} text="管理数据模型" />
            </SmallColumn>
          </GroupBody>
          <GroupLabel>数据工具</GroupLabel>
        </Group>
        <Group $w={111}>
          <GroupBody>
            <BigButton $w={52} $ml={8}>
              <IconSlot><WhatIfIcon /></IconSlot>
              <BigLine>模拟分析</BigLine>
              <BigLine><Caret $ml={0} /></BigLine>
            </BigButton>
            <BigButton $w={44} $ml={1}>
              <IconSlot><ForecastIcon /></IconSlot>
              <BigLine>预测</BigLine>
              <BigLine>工作表</BigLine>
            </BigButton>
          </GroupBody>
          <GroupLabel>预测</GroupLabel>
        </Group>
        <Group $w={128}>
          <GroupBody>
            <SmallColumn $ml={12} $w={91}>
              <SmallButton icon={<GroupIcon />} text="组合" caret />
              <SmallButton icon={<UngroupIcon />} text="取消组合" caret />
              <SmallButton icon={<SubtotalIcon />} text="分类汇总" />
            </SmallColumn>
            <SmallColumn $ml={0}>
              <SmallItem><DetailIcon plus /></SmallItem>
              <SmallItem><DetailIcon /></SmallItem>
            </SmallColumn>
          </GroupBody>
          <GroupLabel $pad={18}>分级显示</GroupLabel>
          <Launcher><LaunchIcon /></Launcher>
        </Group>
      </Ribbon>

      <FormulaRow>
        <NameBox>A1<SmallDown /></NameBox>
        <Grip><span /><span /><span /></Grip>
        <FxBox><CrossIcon /><CheckIcon /><FxLabel>fx</FxLabel></FxBox>
        <FormulaInput>通过转置来变换数据位置</FormulaInput>
      </FormulaRow>

      <HeaderRow>
        <CornerCell />
        <ColHeads>
          {["A", "B", "C", "D", "E", "F", "G"].map((c) => (
            <ColHead key={c} $active={c === "A"}>{c === "G" ? "" : c}</ColHead>
          ))}
        </ColHeads>
      </HeaderRow>

      <SheetBody>
        <RowHeads>
          {rowLabels.map((n) => (
            <RowHead key={n} $active={n === 1}>{n}</RowHead>
          ))}
        </RowHeads>
        <Canvas>
          <SelectedCell />
          <DataCell $col={3} $row={5} $head>物品</DataCell>
          <DataCell $col={3} $row={6} $head>金额</DataCell>
          <DataCell $col={4} $row={5}>面包</DataCell>
          <DataCell $col={5} $row={5}>甜甜圈</DataCell>
          <DataCell $col={6} $row={5}>曲奇饼</DataCell>
          <DataCell $col={7} $row={5}>蛋糕</DataCell>
          <DataCell $col={4} $row={6} $right>50</DataCell>
          <DataCell $col={5} $row={6} $right>100</DataCell>
          <DataCell $col={6} $row={6} $right>40</DataCell>
          <DataCell $col={7} $row={6} />
          <YellowCell />

          <PawSlot><PawIcon /></PawSlot>
          <Water $x={797} $y={236} $size={40}>Bai</Water>
          <Water $x={878} $y={243} $size={19}>du</Water>
          <Water $x={921} $y={240} $size={31}>经验</Water>
          <Water $x={795} $y={276} $size={26.3}>jingyan.baidu.com</Water>

          <OwlSlot><OwlIcon /></OwlSlot>
          <TipText>
            <TipHead>专家</TipHead>
            <div>“选</div>
            <div>键是</div>
          </TipText>

          <Panel>
            <PanelTitle>通过转置来变换数据位置</PanelTitle>
            <PanelRule />
            <Intro>当需要旋转列和行时<Punct>，</Punct>可在 Excel 中进行<em>转置</em>。</Intro>
            <Steps>
              <Step>
                <StepNum>1</StepNum>
                <StepText>单击并从<b>“项目”</b>拖动到<b>“20”</b><Punct>，</Punct>选中两行单元格。</StepText>
              </Step>
              <Step>
                <StepNum>2</StepNum>
                <StepText>现在<Punct>，</Punct>复制单元格。按<Kbd $w={50} $ml={5}>Ctrl</Kbd><Kbd $w={46} $ml={4}>C</Kbd></StepText>
              </Step>
              <Step>
                <StepNum>3</StepNum>
                <StepText>单击黄色单元格。</StepText>
              </Step>
              <Step>
                <StepNum>4</StepNum>
                <StepText>在<b>“开始”</b>选项卡上<Punct>，</Punct>单击<b>“粘贴”</b>按钮下的箭头。</StepText>
              </Step>
            </Steps>
            <PasteCard>
              <ClipboardIcon />
              <PasteLabel>粘贴</PasteLabel>
              <Chevron />
            </PasteCard>
            <PasteArrow><DottedArrow /></PasteArrow>
          </Panel>
        </Canvas>
      </SheetBody>

      <TabStrip>
        <NavArea><NavMark $dim /><NavMark /></NavArea>
        {sheets.map((s, i) => (
          <SheetTab key={s} $active={s === "4. 转置"} $last={i === sheets.length - 1}>{s}</SheetTab>
        ))}
        <TabExtras>
          <span>…</span>
          <PlusCircle />
          <TabGrip />
        </TabExtras>
        <ScrollTrack><ScrollThumb /></ScrollTrack>
      </TabStrip>

      <Overlay width="1083" height="555" viewBox="0 0 1083 555">
        <path d={closedCurve(ringPoints)} fill="none" stroke="#ee1c25" strokeWidth="1" />
        <ellipse cx="563.500" cy="21.500" rx="83.500" ry="15" fill="none" stroke="#ee1c25" strokeWidth="1" strokeDasharray="9 1 30 1" />
      </Overlay>
    </Windowed>
  );
}
